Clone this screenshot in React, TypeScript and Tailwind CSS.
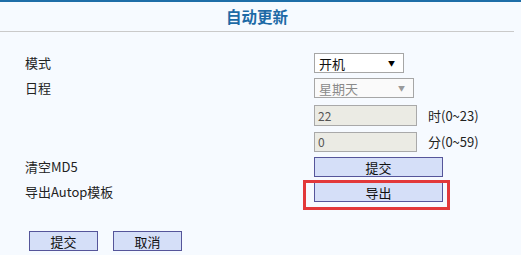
const font = { fontFamily: '"Noto Sans CJK SC", "Noto Sans", sans-serif' }

function Row({ label, children, className = '' }: { label?: string; children: React.ReactNode; className?: string }) {
  return (
    <div className={`flex items-center ${className}`}>
      <div className="w-[314px] pl-[25px] text-[13px] text-[#222]">{label}</div>
      {children}
    </div>
  )
}

function FakeSelect({ value, width, disabled }: { value: string; width: string; disabled?: boolean }) {
  return (
    <div
      className={`${width} h-[20px] flex items-center justify-between border border-[#a6a6a6] pl-[4px] pr-[8px] text-[13px] leading-none ${
        disabled ? 'bg-[#fafafa] text-[#8a8a8a]' : 'bg-white text-[#111]'
      }`}
    >
      <span>{value}</span>
      <span className={`text-[7px] ${disabled ? 'text-[#9a9a9a]' : 'text-black'}`}>▼</span>
    </div>
  )
}

function Btn({ children, width = 'w-[129px]' }: { children: React.ReactNode; width?: string }) {
  return (
    <button className={`${width} h-[20px] flex items-center justify-center border border-[#55559a] bg-[#d5dff8] text-[13px] leading-none text-[#111]`}>
      {children}
    </button>
  )
}

export default function App() {
  return (
    <div className="w-[521px] h-[255px] overflow-hidden bg-[#f6faff]" style={font}>
      <div className="h-[2px] bg-[#1e6ea8]" />
      <div className="w-[514px] h-[29px] flex items-center justify-center text-[15.5px] font-bold text-[#1d6aa6]">自动更新</div>
      <div className="h-px w-[514px] bg-[#cacaca]" />

      <Row label="模式" className="mt-[21px]">
        <FakeSelect value="开机" width="w-[90px]" />
      </Row>
      <Row label="日程" className="mt-[5px]">
        <FakeSelect value="星期天" width="w-[100px]" disabled />
      </Row>
      <Row className="mt-[7px]">
        <div className="w-[103px] h-[21px] flex items-center border border-[#a9a9a9] bg-[#ebebe4] pl-[3px] text-[12px] text-[#555]">22</div>
        <span className="ml-[11px] text-[13px] text-[#222]">时(0~23)</span>
      </Row>
      <Row className="mt-[6px]">
        <div className="w-[103px] h-[20px] flex items-center border border-[#a9a9a9] bg-[#ebebe4] pl-[3px] text-[12px] text-[#555]">0</div>
        <span className="ml-[11px] text-[13px] text-[#222]">分(0~59)</span>
      </Row>
      <Row label="清空MD5" className="mt-[5px]">
        <Btn>提交</Btn>
      </Row>
      <Row label="导出Autop模板" className="mt-[5px]">
        <div className="relative">
          <Btn>导出</Btn>
          {/* highlight annotation */}
          <div className="absolute -left-[11px] -right-[7px] -top-[2px] -bottom-[8px] border-[3px] border-[#e2383a]" />
        </div>
      </Row>

      <div className="mt-[29px] pl-[29px] flex gap-[15px]">
        <Btn width="w-[69px]">提交</Btn>
        <Btn width="w-[69px]">取消</Btn>
      </div>
    </div>
  )
}
